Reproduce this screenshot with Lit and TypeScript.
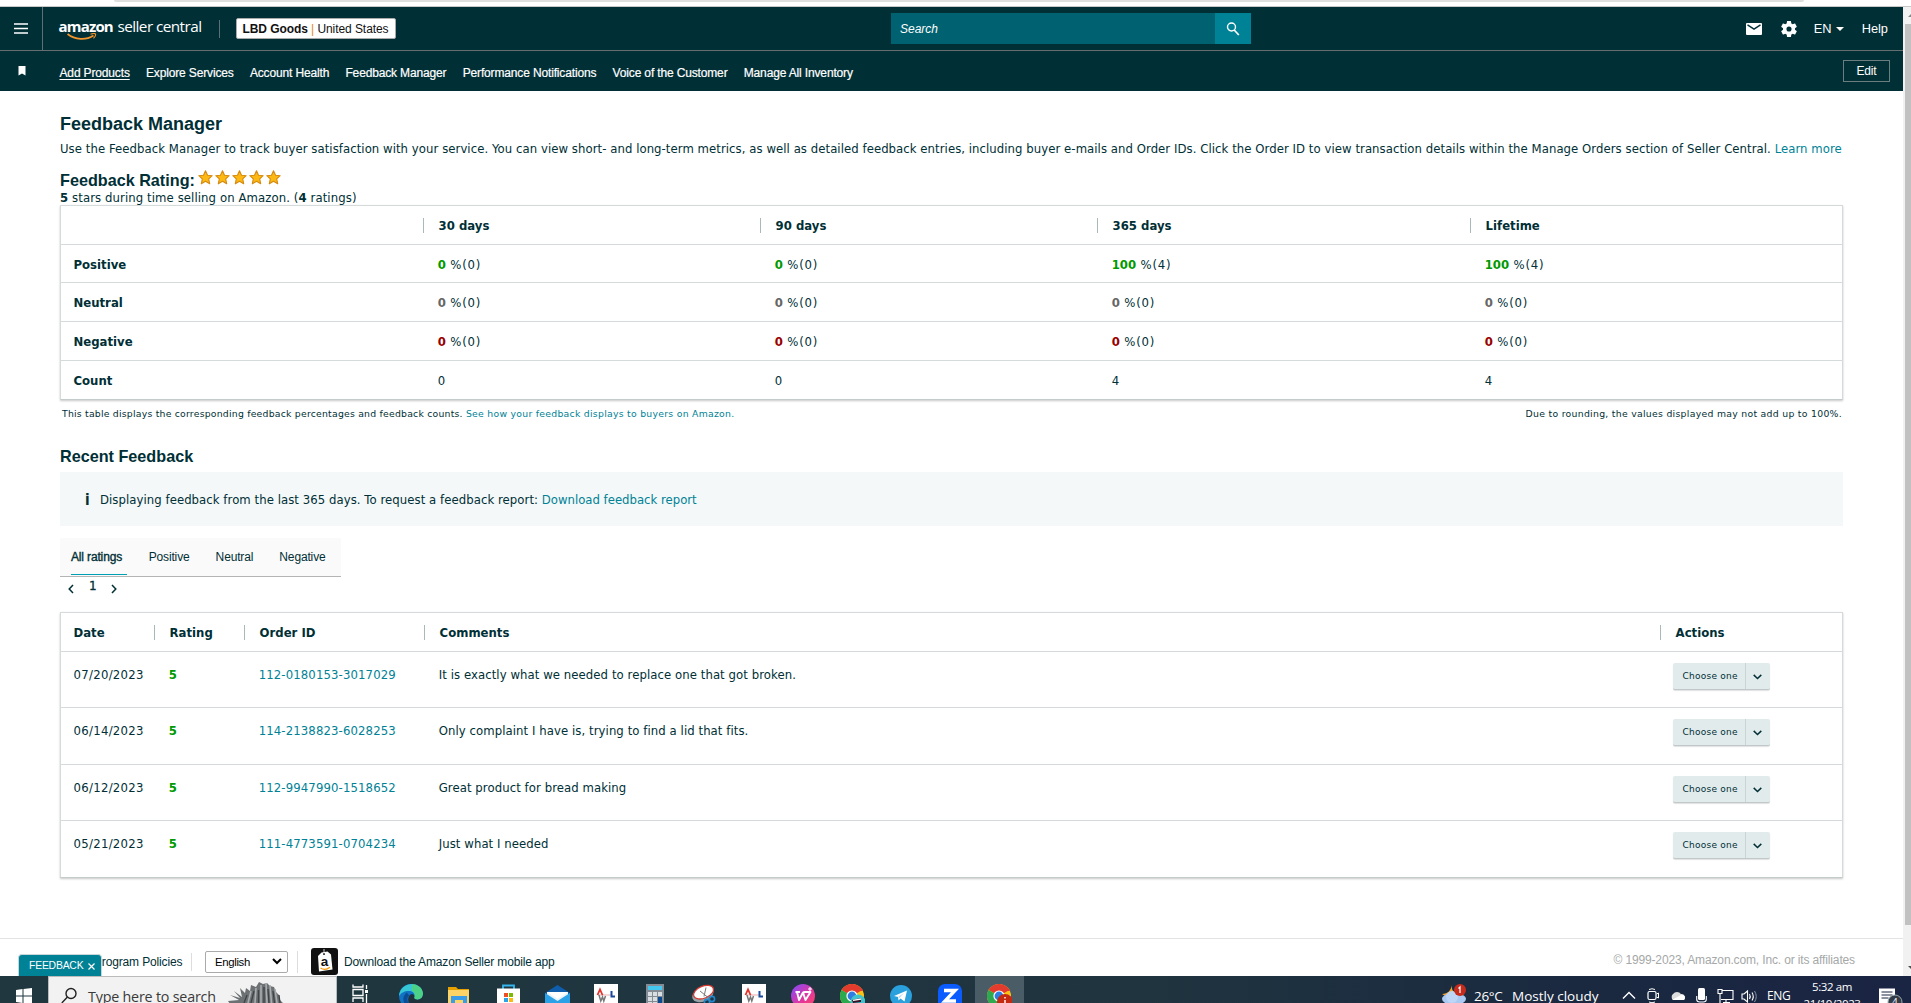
import { LitElement, html, css, svg } from "lit";
import { customElement } from "lit/decorators.js";
import { classMap } from "lit/directives/class-map.js";

const NAV = [
  "Add Products", "Explore Services", "Account Health", "Feedback Manager",
  "Performance Notifications", "Voice of the Customer", "Manage All Inventory",
];

const SUMMARY = [
  { label: "Positive", tone: "pos", cells: [["0", "0"], ["0", "0"], ["100", "4"], ["100", "4"]] },
  { label: "Neutral", tone: "neu", cells: [["0", "0"], ["0", "0"], ["0", "0"], ["0", "0"]] },
  { label: "Negative", tone: "neg", cells: [["0", "0"], ["0", "0"], ["0", "0"], ["0", "0"]] },
];

const FEEDBACK = [
  ["07/20/2023", "5", "112-0180153-3017029", "It is exactly what we needed to replace one that got broken."],
  ["06/14/2023", "5", "114-2138823-6028253", "Only complaint I have is, trying to find a lid that fits."],
  ["06/12/2023", "5", "112-9947990-1518652", "Great product for bread making"],
  ["05/21/2023", "5", "111-4773591-0704234", "Just what I needed"],
];

const star = html`<svg class="star" width="15" height="15" viewBox="0 0 15 15">
  <path d="M7.5 .8l2 4.4 4.7.5-3.5 3.2 1 4.900-4.200-2.500-4.200 2.500 1-4.900L.8 5.700l4.700-.5z" fill="#fdb913" stroke="#d58a10" stroke-width="1.1" stroke-linejoin="round"/></svg>`;

const chevron = html`<svg width="9" height="6" viewBox="0 0 9 6"><path d="M.7 .9L4.500 4.500 8.300 .9" fill="none" stroke="#002f36" stroke-width="1.500"/></svg>`;

const chrome = svg`
  <circle cx="12" cy="12" r="12" fill="#fbc116"/>
  <path d="M12 12L1.6 6A12 12 0 0 1 22.4 6z" fill="#e33b2e"/>
  <path d="M12 12L1.6 6A12 12 0 0 0 11 24z" fill="#2da94f"/>
  <path d="M6 7h17l-1-2H4z" fill="#e33b2e"/>
  <circle cx="12" cy="12" r="5.6" fill="#fff"/><circle cx="12" cy="12" r="4.4" fill="#2f7de1"/>`;

const chartApp = svg`
  <path d="M0 0h24v19H0z" fill="#fff"/>
  <path d="M4 11h14" stroke="#eaa" stroke-width="1"/>
  <path d="M3.500 11L6 5.500l2.500 5.500" fill="none" stroke="#e2332c" stroke-width="1.800"/>
  <path d="M5 11l1.800 6 1.700-4 1.300 4 1.700-5" fill="none" stroke="#777" stroke-width="1.500"/>
  <path d="M17.500 7v5.500h3.500" fill="none" stroke="#164a9c" stroke-width="2"/>`;

const APPS = [
  // task view
  svg`<path d="M4 5.500h10v6H4zM4 18v-4h10v4M4 .500V3h10V.500M17.500 1v4M17.500 10v9" fill="none" stroke="#fff" stroke-width="1.300"/><rect x="16" y="6" width="3" height="3" fill="#fff"/>`,
  // edge
  svg`<circle cx="13" cy="12" r="12" fill="#1273c4"/>
    <path d="M1 12C2-3 24-4 25 10c0 6-7 7-9 4 2-4-1-7-5-7C6 7 3 9 1 12z" fill="#36c6d6"/>
    <path d="M14 .200C21 .500 25 5 25 10c0 6-7 7-9 4 2-4 0-6-2-7z" fill="#53d56c" opacity=".75"/>
    <path d="M10 10c-4 3-3 8 0 11" stroke="#0b4d94" stroke-width="4" fill="none"/>
    <path d="M16 14c2 3 9 2 9-4l1 9H11c-2-3 0-9 3-9 2 0 3 2 2 4z" fill="#20323b"/>`,
  // file explorer
  svg`<path d="M1 3h8l2 2h11v4H1z" fill="#e6a100"/><path d="M1 6h21v13H1z" fill="#fcd366"/><path d="M4 19v-7h16v7h-4v-3H8v3z" fill="#3a9be8"/>`,
  // store
  svg`<path d="M7 5V1.500h11V5" fill="none" stroke="#35b6ee" stroke-width="1.800"/><path d="M1 4.500h23V19H1z" fill="#fff"/>
    <path d="M8 9h4v4H8z" fill="#ee4f26"/><path d="M13 9h4v4h-4z" fill="#7cb900"/><path d="M8 14h4v4H8z" fill="#2aa3ea"/><path d="M13 14h4v4h-4z" fill="#fcb813"/>`,
  // mail
  svg`<path d="M0 9L12.500 1 25 9v10H0z" fill="#0f5ead"/><path d="M2 8h21v11H2z" fill="#e9f3fb"/><path d="M0 9l12.500 8L25 9v10H0z" fill="#2ba2e8"/><path d="M2 8h21l-10.500 7z" fill="#fff"/>`,
  chartApp,
  // calculator
  svg`<path d="M3 0h18v19H3z" fill="#838c94"/><path d="M5 2h14v4H5z" fill="#43c9f0"/>
    <path d="M5 8h4v4H5zM10 8h4v4h-4zM15 8h4v4h-4zM5 13h4v4H5zM10 13h4v4h-4zM5 18h4v1H5zM10 18h4v1h-4z" fill="#d9dee3"/><path d="M15 13h4v6h-4z" fill="#0b4a8f"/>`,
  // snipping tool
  svg`<ellipse cx="11" cy="10.500" rx="11" ry="7" transform="rotate(-22 11 11)" fill="#9aa3a8"/><ellipse cx="11.500" cy="8" rx="10.500" ry="6" transform="rotate(-22 12 8)" fill="#fff" stroke="#d23b33" stroke-width="1.300"/>
    <path d="M8 7l10 8M14 3.500l-2 9" stroke="#777" stroke-width="1"/><circle cx="20" cy="15" r="2.600" fill="none" stroke="#2488cf" stroke-width="1.600"/><circle cx="15" cy="18" r="2.600" fill="none" stroke="#2488cf" stroke-width="1.600"/>`,
  chartApp,
  // office suite
  svg`<defs><linearGradient id="w" x1="0" y1="0" x2="1" y2="1"><stop offset="0" stop-color="#7d4bff"/><stop offset=".6" stop-color="#e6359a"/><stop offset="1" stop-color="#ff4a5c"/></linearGradient></defs>
    <circle cx="12" cy="12" r="12" fill="url(#w)"/><path d="M4.500 8h4.500M6 8l2 8 4-7.500 2.500 7.500 5-8h-5.500c-2 0-2.500 1.500-2 3" fill="none" stroke="#fff" stroke-width="1.900" stroke-linejoin="round"/><path d="M19 3v4M17 5h4" stroke="#fff" stroke-width="1"/>`,
  svg`${chrome}<circle cx="18" cy="18" r="7.500" fill="#3fc4cf"/><path d="M12 16l9-2v4l-8 1z" fill="#3a1226"/><path d="M13 15.800l8-1.500v1.500l-8 1.300z" fill="#fff"/>`,
  // messenger
  svg`<circle cx="12" cy="12" r="11" fill="#2aa1dd"/><path d="M5 12l13-5.500-2.500 11-4-3-2 2-.5-3.500z" fill="#fff"/><path d="M9 13l6-4-4.500 5z" fill="#b9d9ee"/>`,
  // blue Z tile
  svg`<rect width="24" height="26" rx="7" fill="#0b5cff"/><path d="M6 6.500h11L7 17h11" fill="none" stroke="#fff" stroke-width="3.400"/>`,
  svg`${chrome}<circle cx="18" cy="18" r="8" fill="#c5290f"/><path d="M18 13v1.500M18 16v3" stroke="#fff" stroke-width="1.400"/>`,
];

@customElement("app-root")
export class AppRoot extends LitElement {
  static styles = css`
    :host { display: block; }
    * { box-sizing: border-box; }
    svg { display: block; flex: none; }
    .screen { width: 1911px; height: 1003px; overflow: hidden; display: flex; flex-direction: column; background: #fff; color: #002f36; font: 11.7px/16px "DejaVu Sans", Verdana, sans-serif; }
    .arial { font-family: "Liberation Sans", Arial, sans-serif; }
    .chrome { height: 7px; padding: 0 107px 0 114px; border-bottom: 1px solid #c8c8c8; flex: none; }
    .omnibox { height: 2px; background: #dfdfdf; border-radius: 0 0 10px 10px; }
    .view { display: flex; height: 969px; flex: none; }
    .page { position: relative; width: 1903px; display: flex; flex-direction: column; }
    .scroll { width: 8px; background: #f1f1f1; display: flex; flex-direction: column; align-items: flex-end; justify-content: space-between; overflow: hidden; }
    .thumb { width: 6px; height: 901px; background: #c1c1c1; }
    .arrow { height: 17px; width: 3px; display: flex; align-items: center; }
    .arrow.last { height: 51px; padding-top: 34px; }
    a { color: #008296; }

    .top { height: 44px; background: #002f36; border-bottom: 1px solid #666e70; display: grid; grid-template-columns: 43px 848px 360px 1fr; align-items: center; color: #fff; flex: none; }
    .burger { height: 43px; border-right: 1px solid #5c7075; display: flex; align-items: center; padding-left: 14px; }
    .brandrow { display: flex; align-items: center; padding-left: 16px; }
    .brand { position: relative; width: 161px; border-right: 1px solid #5c7075; height: 18px; font: 15.3px/18px "Open Sans", sans-serif; display: flex; gap: 4px; white-space: nowrap; letter-spacing: -.56px; }
    .brand span { margin-top: -2.500px; }
    .brand .az { font-weight: 700; font-size: 15px; letter-spacing: -.82px; width: 55px; margin-left: -.5px; }
    .smile { position: absolute; left: 8px; top: 13px; }
    .store { margin-left: 16px; width: 160px; height: 21px; background: #fff; border: 1px solid #aaa; border-radius: 2px; color: #111; display: flex; align-items: center; justify-content: center; font-size: 12px; white-space: pre; letter-spacing: -.07px; padding-right: 1px; }
    .store i { color: #e08a1e; font-style: normal; }
    .search { display: flex; height: 31px; background: #006170; align-items: center; font-style: italic; font-size: 12px; padding-left: 9px; justify-content: space-between; }
    .go { width: 36px; height: 31px; background: #008296; display: flex; align-items: center; justify-content: center; }
    .tools { display: grid; grid-template-columns: 35px 33px 48px auto; justify-content: end; padding-right: 15px; align-items: center; font-size: 12.8px; }
    .lang { display: flex; align-items: center; gap: 5px; }

    .nav { height: 40px; background: #002f36; color: #fff; display: flex; align-items: center; padding-right: 13px; flex: none; }
    .nav svg { margin: 0 34px 0 17.500px; }
    .links { display: flex; gap: 16.25px; flex: 1; font-size: 12px; padding-top: 3px; letter-spacing: -.15px; -webkit-text-stroke: .2px #fff; }
    .links .on { text-decoration: underline; text-underline-offset: 2px; }
    .edit { width: 47px; height: 22px; border: 1px solid #6c7d80; display: grid; place-items: center; font-size: 12px; letter-spacing: -.15px; }

    main { padding: 22px 60px 0; height: 847px; flex: none; white-space: nowrap; }
    h1, h2 { margin: 0; font-family: "Liberation Sans", Arial, sans-serif; font-weight: 700; }
    h1 { font-size: 18px; line-height: 23px; }
    .desc { line-height: 28px; letter-spacing: .056px; margin: -1px 0 0; }
    .rating { display: flex; gap: 3px; margin-top: 7px; height: 20px; }
    h2 { font-size: 16.2px; line-height: 20px; }
    .stars { display: flex; gap: 2px; }
    .sub { line-height: 16px; height: 15px; letter-spacing: .09px; }

    .table { width: 1783px; border: 1px solid #d5dbdb; border-bottom-color: #c4cbcb; box-shadow: 0 1px 2px rgba(0,0,0,.22); }
    .row { display: grid; border-bottom: 1px solid #d5dbdb; }
    .row:last-child { border-bottom: 0; }
    .sum .row { grid-template-columns: 362px 337px 337px 373px 1fr; height: 39px; align-items: center; }
    .sum .row.short { height: 38px; }
    .row > div { padding-left: 14.700px; }
    .row > div:first-child { padding-left: 12.500px; }
    .sum .row > div { padding-top: 2px; }
    .pct { letter-spacing: .75px; }
    .head { font-weight: 700; align-items: center; }
    .row.head > div { height: 15px; line-height: 15px; padding-top: 1px; }
    .row.head > div + div { border-left: 1px solid #a9b8b9; padding-left: 14.600px; }
    .pos { color: #090; } .neu { color: #666; } .neg { color: #900; }
    .notes { display: flex; justify-content: space-between; padding: 0 1px 0 2px; height: 46px; line-height: 28px; font-size: 9.3px; letter-spacing: .22px; }
    .notes a { letter-spacing: .27px; }
    .notes .r { letter-spacing: .29px; }

    .info { margin-top: 6px; width: 1783px; height: 54px; background: #f4f8f9; display: flex; align-items: center; padding: 2px 0 0 25px; letter-spacing: .055px; }
    .info b { width: 15px; font: 700 15px "DejaVu Sans Condensed", "DejaVu Sans", sans-serif; color: #002f36; }
    .info a { letter-spacing: 0; }
    .tabs { margin-top: 12px; width: 281px; height: 39px; background: #fafafa; border-bottom: 1px solid #b4b4b4; display: flex; padding-left: 11px; font-size: 12px; letter-spacing: -.15px; }
    .tab { height: 37px; line-height: 39px; margin-right: 26.100px; flex: none; }
    .tab.on { border-bottom: 1px solid #00a0b4; width: 56px; margin-right: 21.700px; -webkit-text-stroke: .35px #002f36; }
    .pager { height: 35px; display: flex; padding: 1px 0 0 8px; line-height: 20px; font-size: 12px; }
    .pager svg { margin-top: 5.500px; }
    .pager span { margin: -2px 15px 0 15px; width: 7px; text-align: center; -webkit-text-stroke: .3px #002f36; }

    .fb .row { grid-template-columns: 93px 90px 180px 1236px 1fr; height: 57px; align-items: start; }
    .fb .row.even { height: 56px; }
    .fb .row.head { height: 39px; align-items: center; }
    .fb .row:not(.head) > div { padding-top: 15px; }
    .fb .row > div.date { letter-spacing: .29px; }
    .fb .row > div.ord { letter-spacing: .12px; }
    .fb .row > div.com { letter-spacing: .07px; }
    .fb .row:not(.head) > div.act { padding: 11px 0 0 13px; }
    .choose { width: 97px; height: 27px; border-radius: 2px; background: #e2ebec; border-bottom: 1px solid #c0c8c9; box-shadow: 0 1px 1px rgba(0,0,0,.12); display: grid; grid-template-columns: 72px 25px; font-size: 9px; letter-spacing: .25px; line-height: 26px; }
    .choose span { padding-left: 9.500px; }
    .choose i { border-left: 1px solid #cbd4d5; display: grid; place-items: center; padding: 1px 1px 0 0; }

    footer { position: relative; height: 38px; border-top: 1px solid #e2e4e4; display: flex; align-items: center; padding: 8px 48px 0 0; font-size: 12px; letter-spacing: -.15px; flex: none; }
    .f1 { width: 192px; padding-left: 94px; height: 18px; line-height: 18px; border-right: 1px solid #ddd; }
    .select { margin-left: 13px; width: 83px; height: 22px; border: 1px solid #aaa; border-radius: 2px; display: flex; justify-content: space-between; align-items: center; padding: 0 5px 0 9px; color: #000; font-size: 11.4px; letter-spacing: -.35px; }
    .sep { margin-left: 9px; width: 1px; height: 22px; background: #ddd; }
    .app { margin: 0 6px 0 13px; }
    .copy { margin-left: auto; color: #a5a8a8; padding-bottom: 4px; letter-spacing: -.14px; }
    .tabfb { position: absolute; left: 18px; bottom: 0; width: 84px; height: 22px; background: #008296; border: 1px solid #c9d6d8; border-bottom: 0; border-radius: 4px 4px 0 0; color: #fff; display: flex; align-items: center; gap: 4.500px; padding: 1px 0 0 10px; font-size: 10.4px; letter-spacing: -.2px; }

    .bar { height: 27px; flex: none; display: flex; background: linear-gradient(90deg, #20373f 0, #1f343f 60%, #1a2840 85%, #1a2443 100%); color: #fff; overflow: hidden; font-family: "Open Sans", "Noto Sans", sans-serif; }
    .start { width: 48px; padding: 12px 0 0 16px; }
    .find { width: 289px; border: 1px solid #bbb; border-bottom: 0; background: #f2f2f2; color: #3a3a3a; display: flex; font-size: 14.3px; line-height: 20px; letter-spacing: -.2px; }
    .find svg { margin: 10px 10px 0 12px; }
    .find span { margin-top: 10px; width: 134px; white-space: nowrap; }
    .find svg.art { margin: 4px 0 0 6px; }
    .apps { display: flex; }
    .appx { width: 49.070px; display: flex; justify-content: center; padding-top: 8px; }
    .appx.on { background: #4a5d66; }
    .tray { margin-left: auto; display: grid; grid-template-columns: 32px 38px 110px 25px 22px 27px 21px 24px 26px 36px 76px 32px; align-items: start; white-space: nowrap; font-size: 13.5px; line-height: 18px; }
    .tray > span { margin-top: 11px; }
    .tray .temp { letter-spacing: -.3px; }
    .tray .eng { font-size: 12px; letter-spacing: -.4px; margin-top: 11px; }
    .tray .clock { font-size: 11.5px; line-height: 17px; width: 58px; text-align: center; margin-top: 2px; letter-spacing: -.4px; }
  `;

  private choose() {
    return html`<div class="choose"><span>Choose one</span><i>${chevron}</i></div>`;
  }

  render() {
    return html`<div class="screen">
      <div class="chrome"><div class="omnibox"></div></div>
      <div class="view">
        <div class="page">
          <div class="top arial">
            <div class="burger"><svg width="14" height="11" viewBox="0 0 14 11"><path d="M0 1h14M0 5.500h14M0 10h14" stroke="#fff" stroke-width="1.500"/></svg></div>
            <div class="brandrow">
              <div class="brand"><span class="az">amazon</span><span>seller central</span>
                <svg class="smile" width="30" height="8" viewBox="0 0 30 8"><path d="M.5 1C8 7 19 7.500 26.500 2.500" fill="none" stroke="#f5952b" stroke-width="1.800"/><path d="M23.500 1.200C26 .300 28 .500 28.500 1c.4 1-.5 3-2 4.300" fill="none" stroke="#f5952b" stroke-width="1.100"/></svg>
              </div>
              <div class="store"><b>LBD Goods</b><i> | </i><span>United States</span></div>
            </div>
            <div class="search"><span>Search</span><span class="go"><svg width="14" height="14" viewBox="0 0 14 14"><circle cx="5.500" cy="5" r="4" fill="none" stroke="#fff" stroke-width="1.400"/><path d="M8.200 8l4.600 5" stroke="#fff" stroke-width="1.700"/></svg></span></div>
            <div class="tools">
              <svg width="16" height="12" viewBox="0 0 16 12"><rect width="16" height="12" rx="1" fill="#fff"/><path d="M1.500 1.800L8 6.200l6.500-4.400" fill="none" stroke="#002f36" stroke-width="1.400"/></svg>
              <svg width="16" height="16" viewBox="2 2 20 20"><path fill="#fff" d="M19.430 12.980c.04-.32.07-.64.07-.98s-.03-.66-.07-.98l2.110-1.650c.19-.15.24-.42.12-.64l-2-3.460c-.12-.22-.39-.3-.61-.22l-2.490 1c-.52-.4-1.080-.73-1.690-.98l-.38-2.650A.488.488 0 0 0 14 2h-4c-.25 0-.46.18-.49.42l-.38 2.650c-.61.25-1.170.59-1.690.98l-2.490-1c-.23-.09-.49 0-.61.22l-2 3.460c-.13.22-.07.49.12.64l2.110 1.650c-.04.32-.07.65-.07.98s.03.66.07.98l-2.110 1.650c-.19.15-.24.42-.12.64l2 3.460c.12.22.39.3.61.22l2.490-1c.52.4 1.080.73 1.690.98l.38 2.650c.03.24.24.42.49.42h4c.25 0 .46-.18.49-.42l.38-2.650c.61-.25 1.170-.59 1.690-.98l2.490 1c.23.09.49 0 .61-.22l2-3.460c.12-.22.07-.49-.12-.64zM12 15.200A3.200 3.200 0 1 1 12 8.800a3.200 3.200 0 0 1 0 6.400z"/></svg>
              <div class="lang"><span>EN</span><svg width="8" height="4" viewBox="0 0 8 4"><path d="M0 0h8L4 4z" fill="#fff"/></svg></div>
              <span>Help</span>
            </div>
          </div>
          <div class="nav arial">
            <svg width="8" height="10" viewBox="0 0 8 10"><path d="M.5 0h7v9.500L4 7.500.5 9.500z" fill="#fff"/></svg>
            <div class="links">${NAV.map((n, i) => html`<span class=${classMap({ on: i === 0 })}>${n}</span>`)}</div>
            <div class="edit">Edit</div>
          </div>
          <main>
            <h1>Feedback Manager</h1>
            <p class="desc">Use the Feedback Manager to track buyer satisfaction with your service. You can view short- and long-term metrics, as well as detailed feedback entries, including buyer e-mails and Order IDs. Click the Order ID to view transaction details within the Manage Orders section of Seller Central. <a>Learn more</a></p>
            <div class="rating"><h2>Feedback Rating:</h2><div class="stars">${[1, 2, 3, 4, 5].map(() => star)}</div></div>
            <div class="sub"><b>5</b> stars during time selling on Amazon. (<b>4</b> ratings)</div>
            <div class="table sum">
              <div class="row head"><div></div><div>30 days</div><div>90 days</div><div>365 days</div><div>Lifetime</div></div>
              ${SUMMARY.map((r, i) => html`<div class=${classMap({ row: true, short: i === 0 })}>
                <div><b>${r.label}</b></div>
                ${r.cells.map(([p, n]) => html`<div><b class=${r.tone}>${p}</b><span class="pct"> %(${n})</span></div>`)}
              </div>`)}
              <div class="row short"><div><b>Count</b></div><div>0</div><div>0</div><div>4</div><div>4</div></div>
            </div>
            <div class="notes"><span>This table displays the corresponding feedback percentages and feedback counts. <a>See how your feedback displays to buyers on Amazon.</a></span><span class="r">Due to rounding, the values displayed may not add up to 100%.</span></div>
            <h2>Recent Feedback</h2>
            <div class="info"><b>i</b><span>Displaying feedback from the last 365 days. To request a feedback report: <a>Download feedback report</a></span></div>
            <div class="tabs arial">${["All ratings", "Positive", "Neutral", "Negative"].map((t, i) => html`<span class=${classMap({ tab: true, on: i === 0 })}>${t}</span>`)}</div>
            <div class="pager">
              <svg width="6" height="10" viewBox="0 0 6 10"><path d="M5 1L1.200 5 5 9" fill="none" stroke="#002f36" stroke-width="1.500"/></svg>
              <span>1</span>
              <svg width="6" height="10" viewBox="0 0 6 10"><path d="M1 1l3.800 4L1 9" fill="none" stroke="#002f36" stroke-width="1.500"/></svg>
            </div>
            <div class="table fb">
              <div class="row head"><div>Date</div><div>Rating</div><div>Order ID</div><div>Comments</div><div>Actions</div></div>
              ${FEEDBACK.map(([d, s, o, c], i) => html`<div class=${classMap({ row: true, even: i !== 1 })}>
                <div class="date">${d}</div><div><b class="pos">${s}</b></div><div class="ord"><a>${o}</a></div><div class="com">${c}</div><div class="act">${this.choose()}</div>
              </div>`)}
            </div>
          </main>
          <footer class="arial">
            <div class="f1">Program Policies</div>
            <div class="select"><span>English</span><svg width="10" height="7" viewBox="0 0 10 7"><path d="M1 1l4 4 4-4" fill="none" stroke="#000" stroke-width="2"/></svg></div>
            <div class="sep"></div>
            <svg class="app" width="27" height="27" viewBox="0 0 27 27"><rect width="27" height="27" rx="3" fill="#111"/><path d="M7 8l3.500-3.500 6-1L20 6.500l1.500 15-13.500 2z" fill="#fff"/><circle cx="13" cy="6" r="1" fill="#111"/><path d="M13 5.500V1" stroke="#fff" stroke-width=".8"/><text x="9.800" y="18" font-family="Liberation Sans" font-weight="700" font-size="13.500" fill="#111">a</text><path d="M9.500 20c3 2 6.500 1.500 9.500-.8" stroke="#f90" stroke-width="1.200" fill="none"/></svg>
            <span>Download the Amazon Seller mobile app</span>
            <span class="copy">© 1999-2023, Amazon.com, Inc. or its affiliates</span>
            <div class="tabfb"><span>FEEDBACK</span><svg width="7" height="7" viewBox="0 0 7 7"><path d="M.5 .5l6 6M6.500 .5l-6 6" stroke="#fff" stroke-width="1.200"/></svg></div>
          </footer>
        </div>
        <div class="scroll">
          <div class="arrow"><svg width="3" height="3" viewBox="0 0 3 3"><path d="M0 3l3-3v3z" fill="#888"/></svg></div>
          <div class="thumb"></div>
          <div class="arrow last"><svg width="3" height="3" viewBox="0 0 3 3"><path d="M0 0l3 3V0z" fill="#505050"/></svg></div>
        </div>
      </div>
      <div class="bar">
        <div class="start"><svg width="16" height="16" viewBox="0 0 16 16"><path d="M0 2l6.500-1v6.500H0zM7.500 .9L16 0v7.500H7.500zM0 8.500h6.500V15L0 14zM7.500 8.500H16V16l-8.500-1z" fill="#fff"/></svg></div>
        <div class="find">
          <svg width="17" height="17" viewBox="0 0 17 17"><circle cx="10" cy="6.500" r="5" fill="none" stroke="#222" stroke-width="1.400"/><path d="M6.200 10.200L.8 16" stroke="#222" stroke-width="1.400"/></svg>
          <span>Type here to search</span>
          <svg class="art" width="60" height="22" viewBox="0 0 60 22">
            <path d="M0 20l11-1-9-5 10 3-6-7 8 6-2-9 5 5 1-5 4 3 1-6 5 2 3-5 4 2 4-1 3 3 4 1 2 5 3 3 1 5 4 4v3H4z" fill="#6d7174"/>
            <path d="M20 22l3-12M27 22l1-15M33 22V4M39 22l-1-20M43.500 22L42 4M49 22L47 8" stroke="#a9adaf" stroke-width="1.600"/>
            <path d="M23 22l3-12M30.500 22V9M36 22V6M41 22l-1-14M46.500 22L45 10M16 22l3-8M52 22l-1-8" stroke="#3e4346" stroke-width="1.300"/>
          </svg>
        </div>
        <div class="apps">${APPS.map((a, i) => html`<div class=${classMap({ appx: true, on: i === APPS.length - 1 })}><svg width="25" height="19" viewBox="0 0 25 19">${a}</svg></div>`)}</div>
        <div class="tray">
          <svg width="26" height="27" viewBox="0 0 26 27"><path d="M10 9c-1 6 3 9 8 8l-3 4H5L0 18c6 0 9-4 10-9z" fill="#f3a42c"/><ellipse cx="12" cy="23" rx="12" ry="6" fill="#a9c8f2"/><circle cx="10" cy="21" r="6" fill="#bdd6f8"/><circle cx="18" cy="14" r="6" fill="#c42b1c"/><path d="M16.500 12.500L18 11v6" fill="none" stroke="#fff" stroke-width="1.200"/></svg>
          <span class="temp">26°C</span><span>Mostly cloudy</span>
          <svg width="14" height="27" viewBox="0 0 14 27"><path d="M1 22.500L7 16.500l6 6" fill="none" stroke="#fff" stroke-width="1.400"/></svg>
          <svg width="13" height="27" viewBox="0 0 13 27"><rect x="1" y="15.500" width="8" height="8" rx="1.500" fill="none" stroke="#fff" stroke-width="1.200"/><path d="M9.500 18l2-1v5l-2-1M2 13.500q3-1.500 6 0M2 26q3 1.500 6 0" fill="none" stroke="#fff"/></svg>
          <svg width="17" height="27" viewBox="0 0 17 27"><path d="M4 24a4 4 0 0 1 0-6 5 5 0 0 1 8 0 3.500 3.500 0 0 1 3 6z" fill="#ddd"/><path d="M3 24l9-5a3 3 0 0 1 3 5z" fill="#fff"/></svg>
          <svg width="11" height="27" viewBox="0 0 11 27"><rect x="2" y="12" width="7" height="12" rx="1.500" fill="#fff"/><path d="M.7 20v3.500q0 2.500 3 2.500h3.600q3 0 3-2.500V20" fill="none" stroke="#fff" stroke-width="1.100"/></svg>
          <svg width="17" height="27" viewBox="0 0 17 27"><path d="M5 14.500h11v9H4M9 24v3M6 26.500h7M1 13.500h4v4H1zM3 18v9" fill="none" stroke="#fff" stroke-width="1.100"/></svg>
          <svg width="17" height="27" viewBox="0 0 17 27"><path d="M1 18v5h2l3.500 3V15L3 18z" fill="none" stroke="#fff" stroke-width="1.100"/><path d="M8.500 18q1.500 2.500 0 5M11 16.500q2.500 4 0 8" fill="none" stroke="#fff" stroke-width="1.100"/><path d="M13.500 15q3.500 5.500 0 11" fill="none" stroke="#8b93a5"/></svg>
          <span class="eng">ENG</span>
          <span class="clock">5:32 am<br>21/10/2023</span>
          <svg width="25" height="27" viewBox="0 0 25 27"><path d="M0 12.500h16V27H0z" fill="#fff"/><path d="M2.500 16h11M2.500 19h11M2.500 22h7" stroke="#1a2443" stroke-width="1.200"/><circle cx="16" cy="26" r="7" fill="#333a48" stroke="#9aa" stroke-width="1"/><text x="13" y="30" font-family="Open Sans" font-size="10" fill="#fff">4</text></svg>
        </div>
      </div>
    </div>`;
  }
}
